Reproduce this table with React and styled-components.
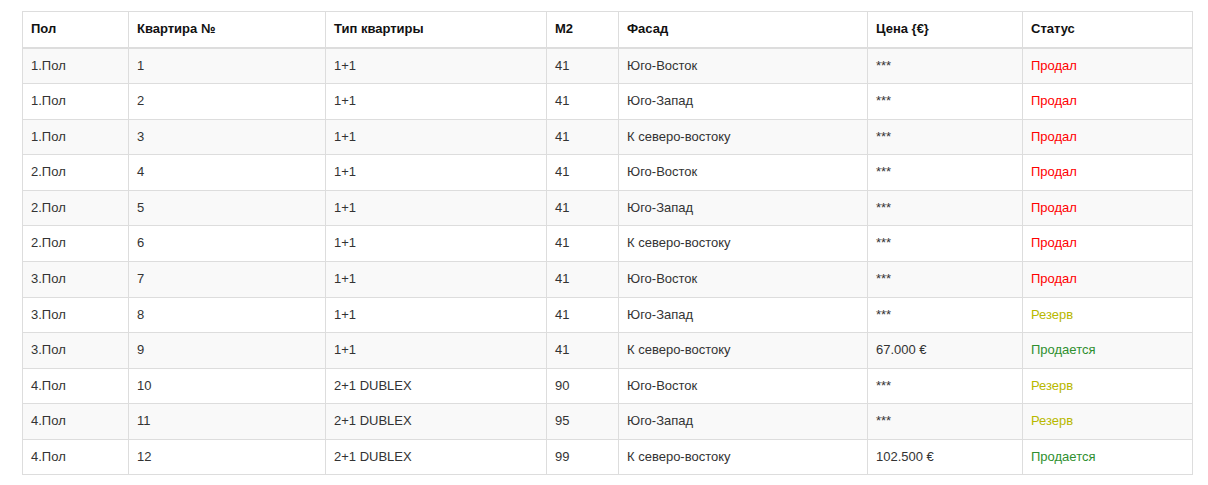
import React from "react";
import styled, { createGlobalStyle } from "styled-components";

const GlobalStyle = createGlobalStyle`
  html, body {
    margin: 0;
    padding: 0;
    background: #fff;
  }
  body {
    font-family: "Liberation Sans", Arial, sans-serif;
    font-size: 13px;
    line-height: 1.42857;
    color: #333;
  }
`;

const Wrapper = styled.div`
  padding: 11px 16px 0 22px;
`;

const Table = styled.table`
  width: 1170px;
  border-collapse: collapse;
  border-spacing: 0;
  table-layout: fixed;
  border: 1px solid #ddd;
`;

const HeadCell = styled.th`
  text-align: left;
  font-weight: bold;
  color: #111;
  padding: 8px;
  vertical-align: bottom;
  border: 1px solid #ddd;
  border-bottom-width: 2px;
`;

const Row = styled.tr`
  background: ${(p) => (p.$striped ? "#f9f9f9" : "#fff")};
`;

const Cell = styled.td`
  padding: 8px;
  vertical-align: top;
  border: 1px solid #ddd;
  color: #333;
`;

const statusColors = {
  sold: "#ff0000",
  reserve: "#b8b800",
  sale: "#2f8f2f",
};

const Status = styled.span`
  color: ${(p) => statusColors[p.$kind]};
`;

const columns = [
  { title: "Пол", width: 106 },
  { title: "Квартира №", width: 197 },
  { title: "Тип квартиры", width: 221 },
  { title: "M2", width: 72 },
  { title: "Фасад", width: 249 },
  { title: "Цена {€}", width: 155 },
  { title: "Статус", width: 170 },
];

const statusText = {
  sold: "Продал",
  reserve: "Резерв",
  sale: "Продается",
};

const rows = [
  ["1.Пол", "1", "1+1", "41", "Юго-Восток", "***", "sold"],
  ["1.Пол", "2", "1+1", "41", "Юго-Запад", "***", "sold"],
  ["1.Пол", "3", "1+1", "41", "К северо-востоку", "***", "sold"],
  ["2.Пол", "4", "1+1", "41", "Юго-Восток", "***", "sold"],
  ["2.Пол", "5", "1+1", "41", "Юго-Запад", "***", "sold"],
  ["2.Пол", "6", "1+1", "41", "К северо-востоку", "***", "sold"],
  ["3.Пол", "7", "1+1", "41", "Юго-Восток", "***", "sold"],
  ["3.Пол", "8", "1+1", "41", "Юго-Запад", "***", "reserve"],
  ["3.Пол", "9", "1+1", "41", "К северо-востоку", "67.000 €", "sale"],
  ["4.Пол", "10", "2+1 DUBLEX", "90", "Юго-Восток", "***", "reserve"],
  ["4.Пол", "11", "2+1 DUBLEX", "95", "Юго-Запад", "***", "reserve"],
  ["4.Пол", "12", "2+1 DUBLEX", "99", "К северо-востоку", "102.500 €", "sale"],
];

export default function App() {
  return (
    <>
      <GlobalStyle />
      <Wrapper>
        <Table>
          <colgroup>
            {columns.map((c) => (
              <col key={c.title} style={{ width: c.width }} />
            ))}
          </colgroup>
          <thead>
            <tr>
              {columns.map((c) => (
                <HeadCell key={c.title}>{c.title}</HeadCell>
              ))}
            </tr>
          </thead>
          <tbody>
            {rows.map((r, i) => (
              <Row key={r[1]} $striped={i % 2 === 0}>
                {r.slice(0, 6).map((v, j) => (
                  <Cell key={j}>{v}</Cell>
                ))}
                <Cell>
                  <Status $kind={r[6]}>{statusText[r[6]]}</Status>
                </Cell>
              </Row>
            ))}
          </tbody>
        </Table>
      </Wrapper>
    </>
  );
}
